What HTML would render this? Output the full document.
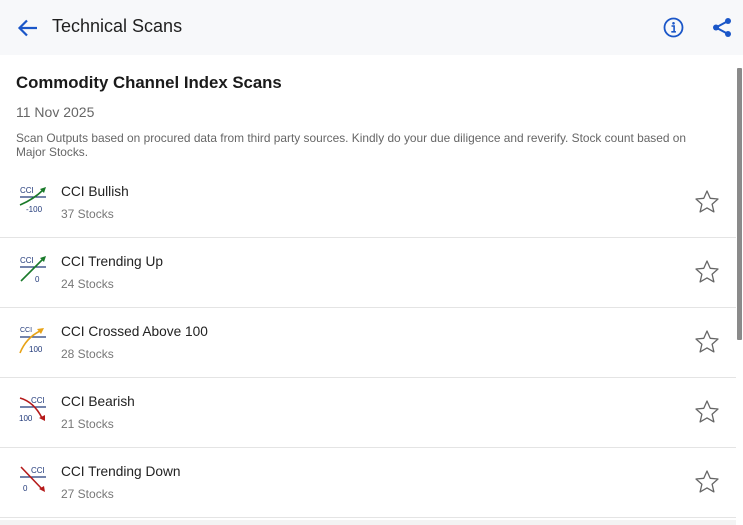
<!DOCTYPE html>
<html><head><meta charset="utf-8"><style>
*{margin:0;padding:0;box-sizing:border-box}
body{width:743px;height:525px;overflow:hidden;background:#fff;font-family:"Liberation Sans",Roboto,sans-serif;position:relative}
.hdr{position:absolute;left:0;top:0;width:743px;height:55px;background:#f7f8fa}
.hdr .t{position:absolute;left:52px;top:16px;font-size:18px;color:#1f1f1f;font-weight:500}
h1{position:absolute;left:16px;top:73px;font-size:16.8px;font-weight:bold;color:#1a1a1a}
.date{position:absolute;left:16px;top:104px;font-size:14px;color:#666}
.desc{position:absolute;left:16px;top:131px;width:720px;font-size:11.9px;line-height:14px;color:#666;white-space:nowrap}
.row{position:absolute;left:0;width:736px;height:70px;border-bottom:1px solid #e4e4e4}
.row svg.ic{position:absolute;left:16px;top:14px}
.row .n{position:absolute;left:61px;top:16px;font-size:13.7px;color:#222}
.row .s{position:absolute;left:61px;top:39px;font-size:12px;color:#777}
.row svg.st{position:absolute;left:694px;top:21px}
.sb{position:absolute;left:737px;top:68px;width:5px;height:272px;background:#8a8a8a;border-radius:1px}
</style></head><body>
<div class="hdr">
<svg style="position:absolute;left:17px;top:17px" width="22" height="22" viewBox="0 0 22 22"><path d="M20 11H3M10 3.5L2.5 11 10 18.5" stroke="#1a56c8" stroke-width="2.2" fill="none"/></svg>
<div class="t">Technical Scans</div>
<svg style="position:absolute;left:663px;top:17px" width="21" height="21" viewBox="0 0 21 21"><circle cx="10.5" cy="10.5" r="9" stroke="#1a56c8" stroke-width="1.8" fill="none"/><circle cx="10.5" cy="6.3" r="1.3" fill="#1a56c8"/><path d="M8.5 9h2.6v5.5M8.3 14.8h4.6" stroke="#1a56c8" stroke-width="1.6" fill="none"/></svg>
<svg style="position:absolute;left:712px;top:17px" width="21" height="21" viewBox="0 0 21 21"><circle cx="16" cy="4" r="3" fill="#1a56c8"/><circle cx="4" cy="10.5" r="3" fill="#1a56c8"/><circle cx="16" cy="17" r="3" fill="#1a56c8"/><path d="M16 4L4 10.5 16 17" stroke="#1a56c8" stroke-width="2" fill="none"/></svg>
</div>
<h1>Commodity Channel Index Scans</h1>
<div class="date">11 Nov 2025</div>
<div class="desc">Scan Outputs based on procured data from third party sources. Kindly do your due diligence and reverify. Stock count based on<br>Major Stocks.</div>

<div class="row" style="top:168px">
<svg class="ic" width="34" height="34" viewBox="0 0 34 34"><text x="4" y="11" font-size="8" fill="#223a7a" font-family="Liberation Sans">CCI</text><line x1="4" y1="15" x2="30" y2="15" stroke="#223a7a" stroke-width="1.2"/><text x="10" y="30" font-size="8" fill="#223a7a" font-family="Liberation Sans">-100</text><path d="M4 23Q18 17 27 8" stroke="#1a7a2a" stroke-width="1.6" fill="none"/><path d="M24 7L30 5 28 11Z" fill="#1a7a2a"/></svg>
<div class="n">CCI Bullish</div><div class="s">37 Stocks</div>
<svg class="st" width="26" height="26" viewBox="0 0 26 26"><path d="M13 2l3.2 7.3 7.8.7-5.9 5.2 1.8 7.7L13 18.9 6.1 22.9l1.8-7.7L2 10l7.8-.7z" stroke="#666" stroke-width="1.3" fill="none" stroke-linejoin="round"/></svg></div>

<div class="row" style="top:238px">
<svg class="ic" width="34" height="34" viewBox="0 0 34 34"><text x="4" y="11" font-size="8" fill="#223a7a" font-family="Liberation Sans">CCI</text><line x1="4" y1="15" x2="30" y2="15" stroke="#223a7a" stroke-width="1.2"/><text x="19" y="30" font-size="8" fill="#223a7a" font-family="Liberation Sans">0</text><path d="M5 29L27 7" stroke="#1a7a2a" stroke-width="1.6" fill="none"/><path d="M24 6L30 4 28 10Z" fill="#1a7a2a"/></svg>
<div class="n">CCI Trending Up</div><div class="s">24 Stocks</div>
<svg class="st" width="26" height="26" viewBox="0 0 26 26"><path d="M13 2l3.2 7.3 7.8.7-5.9 5.2 1.8 7.7L13 18.9 6.1 22.9l1.8-7.7L2 10l7.8-.7z" stroke="#666" stroke-width="1.3" fill="none" stroke-linejoin="round"/></svg></div>

<div class="row" style="top:308px">
<svg class="ic" width="34" height="34" viewBox="0 0 34 34"><text x="4" y="10" font-size="7" fill="#223a7a" font-family="Liberation Sans">CCI</text><line x1="4" y1="15" x2="30" y2="15" stroke="#223a7a" stroke-width="1.2"/><text x="13" y="30" font-size="8" fill="#223a7a" font-family="Liberation Sans">100</text><path d="M4 31Q10 16 24 9" stroke="#e8a317" stroke-width="1.6" fill="none"/><path d="M21 7L28 6 25 12Z" fill="#e8a317"/></svg>
<div class="n">CCI Crossed Above 100</div><div class="s">28 Stocks</div>
<svg class="st" width="26" height="26" viewBox="0 0 26 26"><path d="M13 2l3.2 7.3 7.8.7-5.9 5.2 1.8 7.7L13 18.9 6.1 22.9l1.8-7.7L2 10l7.8-.7z" stroke="#666" stroke-width="1.3" fill="none" stroke-linejoin="round"/></svg></div>

<div class="row" style="top:378px">
<svg class="ic" width="34" height="34" viewBox="0 0 34 34"><text x="15" y="11" font-size="8" fill="#223a7a" font-family="Liberation Sans">CCI</text><line x1="4" y1="15" x2="30" y2="15" stroke="#223a7a" stroke-width="1.2"/><text x="3" y="29" font-size="8" fill="#223a7a" font-family="Liberation Sans">100</text><path d="M4 6Q18 10 26 26" stroke="#b51a1a" stroke-width="1.6" fill="none"/><path d="M23 26L29 29 29 23Z" fill="#b51a1a"/></svg>
<div class="n">CCI Bearish</div><div class="s">21 Stocks</div>
<svg class="st" width="26" height="26" viewBox="0 0 26 26"><path d="M13 2l3.2 7.3 7.8.7-5.9 5.2 1.8 7.7L13 18.9 6.1 22.9l1.8-7.7L2 10l7.8-.7z" stroke="#666" stroke-width="1.3" fill="none" stroke-linejoin="round"/></svg></div>

<div class="row" style="top:448px">
<svg class="ic" width="34" height="34" viewBox="0 0 34 34"><text x="15" y="11" font-size="8" fill="#223a7a" font-family="Liberation Sans">CCI</text><line x1="4" y1="15" x2="30" y2="15" stroke="#223a7a" stroke-width="1.2"/><text x="7" y="29" font-size="8" fill="#223a7a" font-family="Liberation Sans">0</text><path d="M5 5L26 27" stroke="#b51a1a" stroke-width="1.6" fill="none"/><path d="M23 27L29 30 28 24Z" fill="#b51a1a"/></svg>
<div class="n">CCI Trending Down</div><div class="s">27 Stocks</div>
<svg class="st" width="26" height="26" viewBox="0 0 26 26"><path d="M13 2l3.2 7.3 7.8.7-5.9 5.2 1.8 7.7L13 18.9 6.1 22.9l1.8-7.7L2 10l7.8-.7z" stroke="#666" stroke-width="1.3" fill="none" stroke-linejoin="round"/></svg></div>
<div style="position:absolute;left:0;top:520px;width:736px;height:5px;background:#f3f3f3"></div>
<div class="sb"></div>
</body></html>
